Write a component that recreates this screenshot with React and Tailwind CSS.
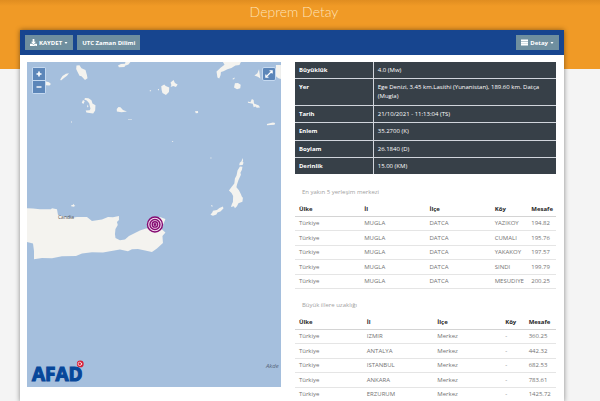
import React from 'react';
import { FaDownload } from 'react-icons/fa';

const details = [
    ['Büyüklük', '4.0 (Mw)'],
    ['Yer', 'Ege Denizi, 3.45 km.Lasithi (Yunanistan), 189.60 km. Datça (Mugla)'],
    ['Tarih', '21/10/2021 - 11:13:04 (TS)'],
    ['Enlem', '35.2700 (K)'],
    ['Boylam', '26.1840 (D)'],
    ['Derinlik', '15.00 (KM)'],
];

const settlements = [
    ['Türkiye', 'MUGLA', 'DATCA', 'YAZIKOY', '194.82'],
    ['Türkiye', 'MUGLA', 'DATCA', 'CUMALI', '195.76'],
    ['Türkiye', 'MUGLA', 'DATCA', 'YAKAKOY', '197.57'],
    ['Türkiye', 'MUGLA', 'DATCA', 'SINDI', '199.79'],
    ['Türkiye', 'MUGLA', 'DATCA', 'MESUDIYE', '200.25'],
];

const cities = [
    ['Türkiye', 'IZMIR', 'Merkez', '-', '360.25'],
    ['Türkiye', 'ANTALYA', 'Merkez', '-', '442.32'],
    ['Türkiye', 'ISTANBUL', 'Merkez', '-', '682.53'],
    ['Türkiye', 'ANKARA', 'Merkez', '-', '783.61'],
    ['Türkiye', 'ERZURUM', 'Merkez', '-', '1425.72'],
];

const columns = ['Ülke', 'İl', 'İlçe', 'Köy', 'Mesafe'];

const ToolbarButton = ({ children }) => (
    <button
        type="button"
        className="flex h-[15px] items-center gap-[2px] bg-[#6f8f9f] px-[5px] text-[6px] leading-none font-bold text-white"
    >
        {children}
    </button>
);

const Caret = () => (
    <svg viewBox="0 0 6 4" className="h-[2px] w-[4px]" fill="currentColor">
        <path d="M0 0h6L3 4z" />
    </svg>
);

const Islands = () => (
    <g fill="#f4f3ef">
        {/* Crete */}
        <path d="M27 208.4L33 208.6L40 209.4L51 209.2L52 208.3L57 209.3L58 215L70 218L77 217L87 217L92 221L102 219.5L108 217L113 217.4L119 216L119 220L117 222L117.8 225L115.5 229L115 234L115.5 238L120 240.3L125 239.5L129 236L135 233L140 230.5L146 228.5L150 228L153 225L156 220L160 217L165.5 219L163.5 224L161.5 229L165.5 232.5L162.5 236L163 243L157 248.5L152 252L144 250.4L138 249L132 249.3L128 251.4L120 249.6L110 251.3L103 252.6L92 252.4L82 253.6L76 256L62 256.4L52 258.2L42 258L34 259.4L34 251L33 243.5L27 242z" />
        <path d="M71 205.5l2-.6.5-1.2.8 1.5 1 .5-1.5 1.2-2.6-.5z" />
        {/* Karpathos and Kasos */}
        <path d="M242.5 158l.7 2.5-.5 1.5 1 .5-1 2.5-3.4.3.5-2.5 1.8-1.6zM240 166.5l2.5.2-.5 3-1.5 3 .5 2-2.5 5.5-1.5 4.5-.5 2.5 2.5 3 2 4 1 2.5 1 1-.5 4-4 1.5-1.5 3-2 2-1-2-3 .8 1-3 1-2 .2-6-1.6-3-2.6-2.5 3-4 2.4-3 .6-5 1.6-3 1-5z" />
        <path d="M223 206.5l.5 2-3 3-3 1-1 2-3.5 1.3-2.5-1 2-2.5.5-1.6 4-.6 2.5-2zM211.5 205l1.5 1-1 .7-.8-.8z" />
        {/* Cyclades */}
        <path d="M76.5 65.5l3-.2 2 3 4 1.6 1.5 5.4.5 3-2.5 1.6-3.5-3.6-2-.6-2.4-4.6-.9-2zM69 73.3l-2 2.5-3 2.3-3 2.3-.8-.8 2.3-3.5 3.5-2.3zM118 65.5l3-1.4 4-.4.5-1.7h5l-2 2.5-3.5 1.3-.4 1.2-5.6.2zM46 81.5l3 .7 2 1.8-1.5 1.6-3.5-.4z" />
        <path d="M85 98l3.5.2 3 2 1 3.4 3 1.6-.3 5.4-2 3-3.6-.5-3.2-.6-.7-2 4-.3.8-1.4-.6-2.6-.7-3-2.4-2.7-2.5-1zM83 100l1.8 1-1.4 3-1.6-1.2zM87.5 104.5l1 2-1.5 1z" />
        <path d="M116.8 109l1.7-2 2 .2 2.5 2.8 4 1.4-5.5.8-4.6-.8zM149.8 90.2h1.3v1h-1.3zM158 89h1v1.2h-1zM71 121.6h1v1h-1zM128 119l4 .4v.5l-4-.4z" />
        <path d="M161.3 86.2l3-1.8 1.5 1.6 3.5 1.5-.3 4.5-3 3-3.5-2-.8-3zM170.6 82.6l3-2.6 1.4 3 2.7 1.4-1.7 2.7-2.7-1-2.6 1 .7-2z" />
        {/* Dodecanese */}
        <path d="M223 62h18l-1.5 3-4 .6-4 2.3-4 1.4-4 2-2.5.8-.3 2.8-1.4 3.5-1.8-1-.9-5.8 2.5-2.4 1.5-1.4 4-3zM235 83.2l3-.2 2.8 1.8-.5 3.4-3.2 1-3-1.8zM232.4 79l2-1.5.5.7-1.5 1.3zM248 101.5l2.5.8 1.5-3.4 1.7 1 .4 3.7 4.8 2 1.2 1.8-3.2.4-1.4-1.3-1.7.7-1-3.5-2.4-.4-2.4-.5zM267 124l6-1.5 2.3.4-.7 1.8-7.5.7zM195 111.3l3-.2.2 2-2.3.2zM172 141l1.4.3-.4.8-1-.2zM210.5 157.6h1v1h-1zM254.5 75.5l3-2.2 1.6-4 1.3 9.2-2.5-1.7zM276 65h5v14l-2.5-.8-2.5-2z" />
    </g>
);

const EarthquakeMap = () => (
    <div className="relative">
        <svg
            viewBox="27 62 254 325"
            className="block h-full w-full bg-[#a5bfdd]"
            preserveAspectRatio="xMidYMid slice"
            role="img"
            aria-label="Harita"
        >
            <Islands />
            <text x="58" y="219.5" fill="#555" fontSize="5" className="font-['Open_Sans',sans-serif]">Candia</text>
            <text x="266" y="368" fill="#56657a" fontSize="6" fontStyle="italic" className="font-['Open_Sans',sans-serif]">Akde</text>
            <g fill="none" stroke="#850b72" strokeWidth="1.4">
                <circle cx="155" cy="224.5" r="7.5" fill="#f3dff0" />
                <circle cx="155" cy="224.5" r="5" />
                <circle cx="155" cy="224.5" r="2.7" />
                <circle cx="155" cy="224.5" r="0.8" fill="#850b72" />
            </g>
            <text x="32" y="381" fill="#07479a" stroke="#07479a" strokeWidth="1.1" fontSize="19" fontWeight="700" className="font-['Open_Sans',sans-serif]">AFAD</text>
            <circle cx="80.3" cy="364" r="3.4" fill="#d81e36" />
            <circle cx="79.8" cy="364" r="1.7" fill="none" stroke="#fff" strokeWidth="0.7" />
            <circle cx="81.6" cy="364" r="0.7" fill="#fff" />
        </svg>
        <div className="absolute top-[5px] left-[5px] flex flex-col gap-px rounded-[2px] bg-[#c5d9f0] p-px text-white">
            <button type="button" aria-label="Yakınlaştır" className="flex h-[12px] w-[12px] items-center justify-center bg-[#5c86b9]">
                <svg viewBox="0 0 12 12" className="h-full w-full" stroke="currentColor" strokeWidth="1.6">
                    <path d="M3.5 6h5M6 3.5v5" />
                </svg>
            </button>
            <button type="button" aria-label="Uzaklaştır" className="flex h-[12px] w-[12px] items-center justify-center bg-[#5c86b9]">
                <svg viewBox="0 0 12 12" className="h-full w-full" stroke="currentColor" strokeWidth="1.4">
                    <path d="M3.5 6h5" />
                </svg>
            </button>
        </div>
        <button
            type="button"
            aria-label="Tam ekran"
            className="absolute top-[5px] right-[5px] h-[14px] w-[14px] rounded-[2px] border border-[#c5d9f0] bg-[#5c86b9] text-white"
        >
            <svg viewBox="0 0 12 12" className="h-full w-full" fill="none" stroke="currentColor" strokeWidth="1.1">
                <path d="M6.5 2.8h2.7v2.7M5.5 9.2H2.8V6.5M9 3L3 9" />
            </svg>
        </button>
    </div>
);

const DistanceTable = ({ title, rows, cols }) => (
    <section>
        <h2 className="px-[7px] text-[6px] leading-[10px] text-neutral-400">{title}</h2>
        <table className="mt-[5px] h-[87px] w-full table-fixed border-collapse text-left text-[6px] leading-[10px]">
            <colgroup>{cols}</colgroup>
            <thead>
                <tr className="h-[14px] border-b border-neutral-300 text-neutral-800">
                    {columns.map((name) => (
                        <th key={name} className="pl-[4px] font-bold">{name}</th>
                    ))}
                </tr>
            </thead>
            <tbody>
                {rows.map((row) => (
                    <tr key={row[4]} className="border-b border-neutral-200 text-neutral-500">
                        {row.map((cell, i) => (
                            <td key={i} className="pl-[4px] whitespace-nowrap">{cell}</td>
                        ))}
                    </tr>
                ))}
            </tbody>
        </table>
    </section>
);

const App = () => {
    return (
        <div className="flex min-h-screen flex-col bg-[linear-gradient(#e08d20,#f09a26_6px,#f09a26_69px,#f4f4f4_69px)] pr-9 pl-5 font-['Open_Sans',sans-serif]">
            <h1 className="h-[30px] pt-[2px] pl-1 text-center font-[Lato,sans-serif] text-[14px] leading-[20px] font-light text-[#fde3b8]">
                Deprem Detay
            </h1>
            <main className="grow bg-white shadow-[0_0_5px_rgba(0,0,0,0.45)]">
                <div className="flex h-[25px] items-center gap-[4px] bg-[#17458f] px-[5px]">
                    <ToolbarButton>
                        <FaDownload className="h-[7px] w-[7px]" />
                        KAYDET
                        <Caret />
                    </ToolbarButton>
                    <ToolbarButton>UTC Zaman Dilimi</ToolbarButton>
                    <div className="ml-auto">
                        <ToolbarButton>
                            <svg viewBox="0 0 8 8" className="h-[7px] w-[7px]" fill="currentColor">
                                <path d="M0 .5h8v2H0zM0 3h8v2H0zM0 5.5h8v2H0z" />
                            </svg>
                            Detay
                            <Caret />
                        </ToolbarButton>
                    </div>
                </div>
                <div className="grid grid-cols-[48%_1fr] items-start gap-[14px] pt-[7px] pr-[8px] pl-[7px]">
                    <EarthquakeMap />
                    <div>
                        <table className="h-[112px] w-full table-fixed border-collapse bg-[#374048] text-left text-[6px] leading-[9px] text-white">
                            <colgroup>
                                <col className="w-[30%]" />
                                <col className="w-[70%]" />
                            </colgroup>
                            <tbody>
                                {details.map(([label, value]) => (
                                    <tr key={label} className="border-b border-gray-300 last:border-b-0">
                                        <th scope="row" className="border-r border-gray-300 px-[4px] pt-[4px] pb-[2px] align-top font-bold">{label}</th>
                                        <td className="px-[4px] pt-[4px] pb-[2px] align-top">{value}</td>
                                    </tr>
                                ))}
                            </tbody>
                        </table>
                        <div className="mt-[13px] flex flex-col gap-[11px]">
                            <DistanceTable
                                title="En yakın 5 yerleşim merkezi"
                                rows={settlements}
                                cols={
                                    <>
                                        <col className="w-[25%]" />
                                        <col className="w-[25%]" />
                                        <col className="w-[25%]" />
                                        <col className="w-[14%]" />
                                        <col className="w-[11%]" />
                                    </>
                                }
                            />
                            <DistanceTable
                                title="Büyük illere uzaklığı"
                                rows={cities}
                                cols={
                                    <>
                                        <col className="w-[26%]" />
                                        <col className="w-[27%]" />
                                        <col className="w-[26%]" />
                                        <col className="w-[9%]" />
                                        <col className="w-[12%]" />
                                    </>
                                }
                            />
                        </div>
                    </div>
                </div>
            </main>
        </div>
    );
};

export default App;
